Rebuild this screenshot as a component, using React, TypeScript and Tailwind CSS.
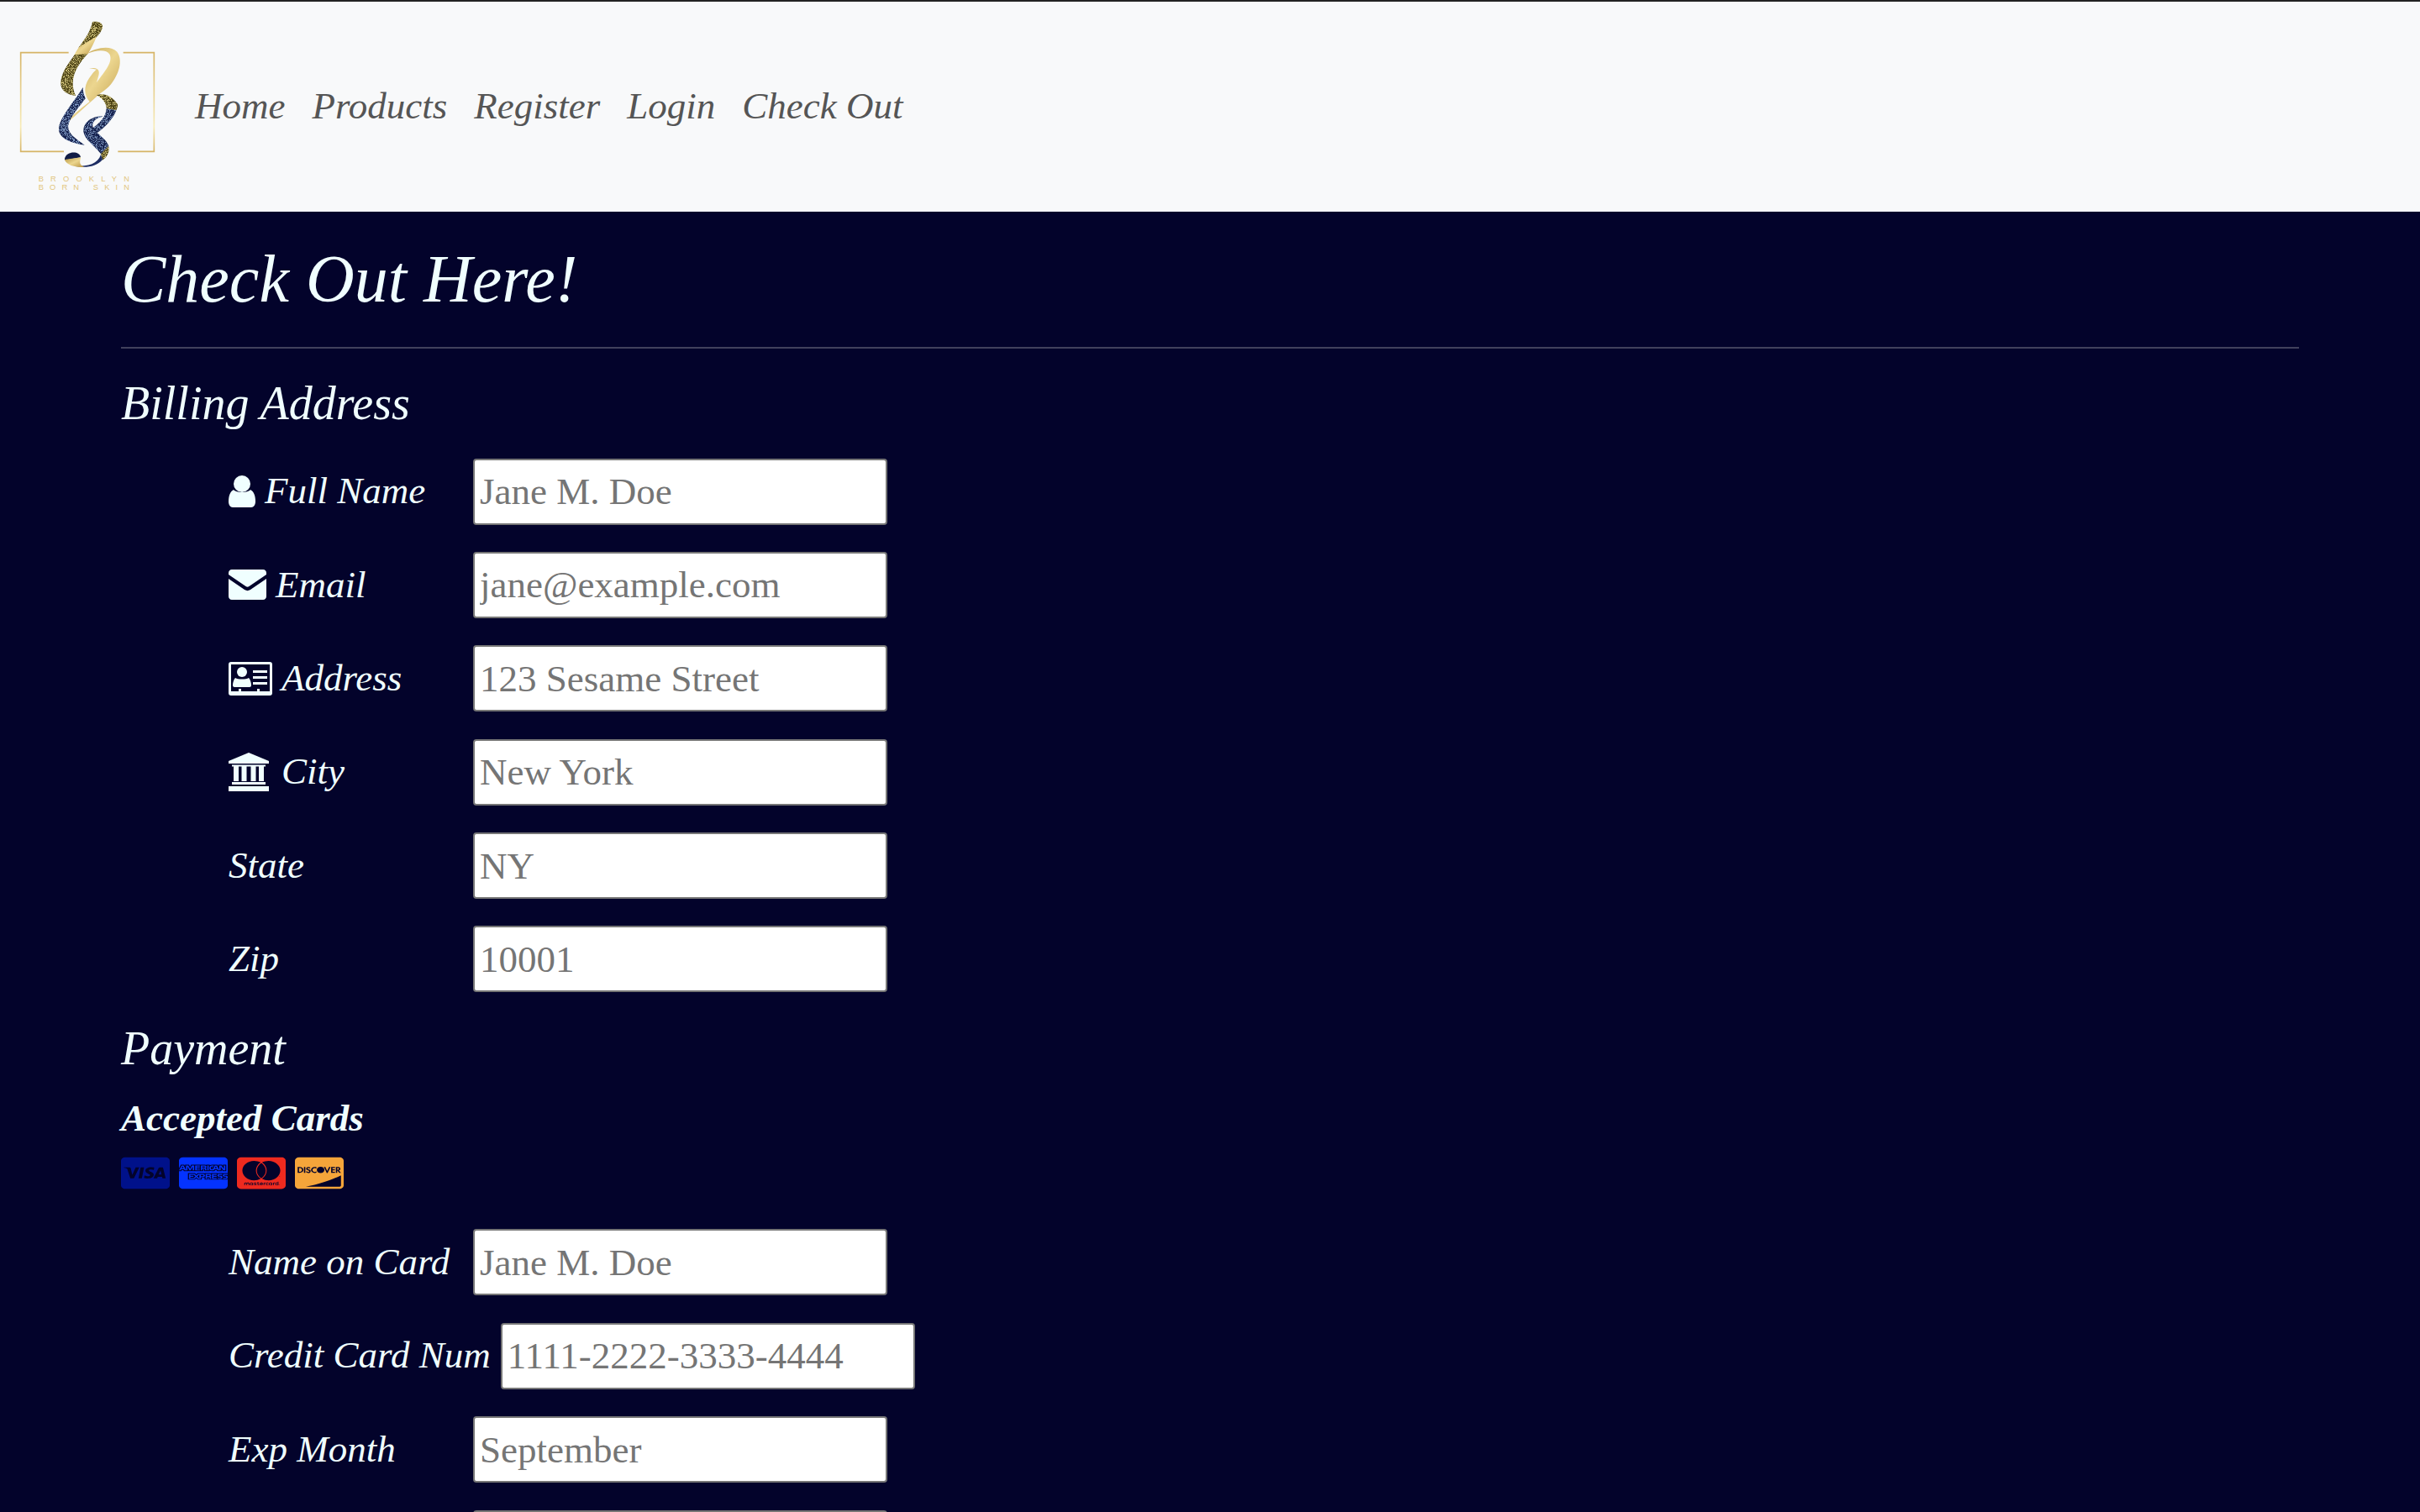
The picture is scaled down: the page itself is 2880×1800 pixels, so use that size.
import { FaCcAmex, FaCcDiscover, FaCcMastercard, FaCcVisa } from "react-icons/fa";

function Logo({ className }: { className: string }) {
  return (
    <svg viewBox="60 60 510 630" className={className}>
      <defs>
        <linearGradient id="gold" x1="0" y1="0" x2="1" y2="1">
          <stop offset="0" stopColor="#b3923f" />
          <stop offset="0.5" stopColor="#ecd68f" />
          <stop offset="1" stopColor="#b8933f" />
        </linearGradient>
        <linearGradient id="frame" x1="0" y1="0" x2="0" y2="1">
          <stop offset="0" stopColor="#d6b465" />
          <stop offset="0.75" stopColor="#f8ecb8" />
          <stop offset="1" stopColor="#d6b465" />
        </linearGradient>
        <filter id="sparkOlive" x="0" y="0" width="1" height="1">
          <feTurbulence type="fractalNoise" baseFrequency="0.45" numOctaves="2" seed="3" result="n" />
          <feColorMatrix in="n" type="matrix" values="0 0 0 0 0.72  0 0 0 0 0.62  0 0 0 0 0.22  0 0 0 5 -2.4" result="s" />
          <feComposite in="s" in2="SourceAlpha" operator="in" result="sp" />
          <feMerge>
            <feMergeNode in="SourceGraphic" />
            <feMergeNode in="sp" />
          </feMerge>
        </filter>
        <filter id="sparkNavy" x="0" y="0" width="1" height="1">
          <feTurbulence type="fractalNoise" baseFrequency="0.45" numOctaves="2" seed="8" result="n" />
          <feColorMatrix in="n" type="matrix" values="0 0 0 0 0.24  0 0 0 0 0.36  0 0 0 0 0.62  0 0 0 5 -2.4" result="s" />
          <feComposite in="s" in2="SourceAlpha" operator="in" result="sp" />
          <feMerge>
            <feMergeNode in="SourceGraphic" />
            <feMergeNode in="sp" />
          </feMerge>
        </filter>
      </defs>
      <path d="M245 188H74V541H228M421 541H550V188H440" fill="none" stroke="url(#frame)" strokeWidth="5" />
      {/* b stem */}
      <path d="M330 78C345 76 368 78 366 98C362 112 354 122 345 132L320 158L280 170C300 145 325 110 330 78Z" fill="#4f4413" filter="url(#sparkOlive)" />
      <path d="M345 130C335 155 325 175 312 195L264 198C270 188 275 178 282 168Z" fill="url(#gold)" />
      <path d="M266 196L312 193C285 225 240 275 270 342C235 338 214 320 217 292C220 255 250 220 266 196Z" fill="#4f4413" filter="url(#sparkOlive)" />
      {/* b bowl, runs down to the thin tip */}
      <path d="M310 192C340 170 395 160 418 185C440 215 425 265 395 302C375 325 352 335 345 345C310 375 270 415 234 442C250 418 285 390 320 363C300 340 298 310 318 280C330 262 338 252 345 248L318 243L336 243C352 245 356 255 352 270L345 295C365 265 405 225 392 195C380 175 345 178 310 192Z" fill="url(#gold)" />
      {/* l */}
      <path d="M296 312C296 325 298 335 305 352C285 380 250 415 243 450C243 478 270 495 302 518C255 510 208 495 210 458C212 420 275 350 296 312Z" fill="#16234f" filter="url(#sparkNavy)" />
      {/* loop at right */}
      <path d="M345 340C372 332 395 340 420 372C421 380 418 388 415 394L380 388C382 372 365 348 345 340Z" fill="#4f4413" filter="url(#sparkOlive)" />
      <path d="M380 388L415 394C405 425 372 458 344 477L330 458C352 442 378 420 380 388Z" fill="#16234f" filter="url(#sparkNavy)" />
      {/* s */}
      <path d="M368 416C340 412 296 430 298 470C302 500 340 520 360 550L388 522C382 495 345 480 332 455C325 435 345 420 368 416Z" fill="#16234f" filter="url(#sparkNavy)" />
      <path d="M388 522C392 545 380 562 366 572L360 550Z" fill="#4f4413" filter="url(#sparkOlive)" />
      <path d="M366 570C345 595 310 600 270 594C315 594 350 585 360 552Z" fill="#1d2d63" />
      {/* dot of s */}
      <path d="M231 566C238 538 285 538 288 562L231 572Z" fill="#111c45" />
      <path d="M231 570L288 562C286 578 280 586 300 597C270 598 236 590 231 570Z" fill="url(#gold)" />
      <text x="137" y="648" fontFamily="Liberation Sans, sans-serif" fontSize="28" textLength="325" lengthAdjust="spacing" fill="#e2c680">BROOKLYN</text>
      <text x="137" y="678" fontFamily="Liberation Sans, sans-serif" fontSize="28" textLength="325" lengthAdjust="spacing" fill="#e2c680">BORN SKIN</text>
    </svg>
  );
}

function UserIcon() {
  return (
    <svg viewBox="0 0 32 38" className="h-[38px] w-[32px] fill-current">
      <circle cx="16" cy="10" r="10" />
      <path d="M6 17C9 21 23 21 26 17C30 19 32 24 32 31C32 35 30 38 27 38H5C2 38 0 35 0 31C0 24 2 19 6 17Z" />
    </svg>
  );
}

function EnvelopeIcon() {
  return (
    <svg viewBox="0 0 45 36" className="h-[36px] w-[45px] fill-current">
      <path d="M4 0H41C43.5 0 45 2 45 4V6L24.5 20C23 21 22 21 20.5 20L0 6V4C0 2 1.5 0 4 0Z" />
      <path d="M0 11L19 24C21.5 25.5 23.5 25.5 26 24L45 11V32C45 34 43.5 36 41 36H4C1.5 36 0 34 0 32Z" />
    </svg>
  );
}

function CardIcon() {
  return (
    <svg viewBox="0 0 52 40" className="h-[40px] w-[52px] fill-current">
      <path
        fillRule="evenodd"
        d="M3 0H49C51 0 52 1 52 3V37C52 39 51 40 49 40H3C1 40 0 39 0 37V3C0 1 1 0 3 0ZM3 3V35H12V32H15V35H34V32H37V35H49V3Z"
      />
      <circle cx="16" cy="12" r="6" />
      <path d="M8 19C11 21 21 21 24 19C26 21 27 25 27 28C27 29 26 30 25 30H7C6 30 5 29 5 28C5 25 6 21 8 19Z" />
      <path d="M29 10H46V13H29ZM29 17H46V20H29ZM29 24H46V27H29Z" />
    </svg>
  );
}

function BankIcon() {
  return (
    <svg viewBox="0 0 48 46" className="h-[46px] w-[48px] fill-current">
      <path d="M24 0L48 10V13H0V10Z" />
      <path d="M4 14.5H44V16.5H4ZM6 16.5H12V34H6ZM15.5 16.5H21.5V34H15.5ZM26.5 16.5H32.5V34H26.5ZM36 16.5H42V34H36ZM4 35H44V38H4ZM0 40H48V46H0Z" />
    </svg>
  );
}

interface Field {
  label?: string;
  placeholder?: string;
  icon?: React.ReactNode;
  iconGap?: string;
}

const billing: Field[] = [
  { label: "Full Name", placeholder: "Jane M. Doe", icon: <UserIcon />, iconGap: "ml-[4px]" },
  { label: "Email", placeholder: "jane@example.com", icon: <EnvelopeIcon />, iconGap: "ml-[4px]" },
  { label: "Address", placeholder: "123 Sesame Street", icon: <CardIcon />, iconGap: "ml-[4px]" },
  { label: "City", placeholder: "New York", icon: <BankIcon />, iconGap: "ml-[8px]" },
  { label: "State", placeholder: "NY" },
  { label: "Zip", placeholder: "10001" },
];

const payment: Field[] = [
  { label: "Name on Card", placeholder: "Jane M. Doe" },
  { label: "Credit Card Num", placeholder: "1111-2222-3333-4444" },
  { label: "Exp Month", placeholder: "September" },
  {},
];

function FieldRow({ field }: { field: Field }) {
  return (
    <div className="flex h-[111.4px] items-start pl-[128px]">
      <label className="mr-[12px] flex h-[79px] min-w-[279px] items-center gap-[7px] whitespace-nowrap text-[45px] italic">
        {field.icon}
        {field.label && <span className={field.iconGap}>{field.label}</span>}
      </label>
      <input
        placeholder={field.placeholder}
        className="h-[79px] w-[493px] rounded-[4px] border-2 border-[#767676] bg-white px-[6px] text-[45px] text-black placeholder:text-[#757575]"
      />
    </div>
  );
}

export default function App() {
  return (
    <div className="h-screen overflow-hidden bg-[#03032b] font-['Liberation_Serif',serif] text-[#f0ffff]">
      <nav className="flex h-[252px] items-center border-t-2 border-[#222] bg-[#f8f9fa] pl-[20px]">
        <Logo className="-mt-[4px] h-[210px] w-[170px] shrink-0" />
        <ul className="ml-[42px] flex gap-[32px] text-[45px] italic text-[#555]">
          {["Home", "Products", "Register", "Login", "Check Out"].map((item) => (
            <li key={item}>
              <a href="#">{item}</a>
            </li>
          ))}
        </ul>
      </nav>
      <main className="mx-auto w-[90%]">
        <h1 className="pt-[32px] text-[80px] leading-[96px] italic">Check Out Here!</h1>
        <hr className="mt-[33px] border-t-2 border-[#40405c]" />
        <h2 className="mt-[32px] text-[56px] leading-[67px] italic">Billing Address</h2>
        <div className="mt-[31.5px]">
          {billing.map((field, i) => (
            <FieldRow key={i} field={field} />
          ))}
        </div>
        <h2 className="mt-[1.5px] text-[56px] leading-[67px] italic">Payment</h2>
        <h3 className="mt-[23px] text-[45px] leading-[53px] font-bold italic">Accepted Cards</h3>
        <div className="mt-[17px] flex gap-[11px]">
          <FaCcVisa className="h-[43px] w-[58px] text-[#00118a]" preserveAspectRatio="none" />
          <FaCcAmex className="h-[43px] w-[58px] text-[#0433ff]" preserveAspectRatio="none" />
          <FaCcMastercard className="h-[43px] w-[58px] text-[#ee2a1f]" preserveAspectRatio="none" />
          <FaCcDiscover className="h-[43px] w-[58px] text-[#f5a53a]" preserveAspectRatio="none" />
        </div>
        <div className="mt-[45px]">
          {payment.map((field, i) => (
            <FieldRow key={i} field={field} />
          ))}
        </div>
      </main>
    </div>
  );
}
